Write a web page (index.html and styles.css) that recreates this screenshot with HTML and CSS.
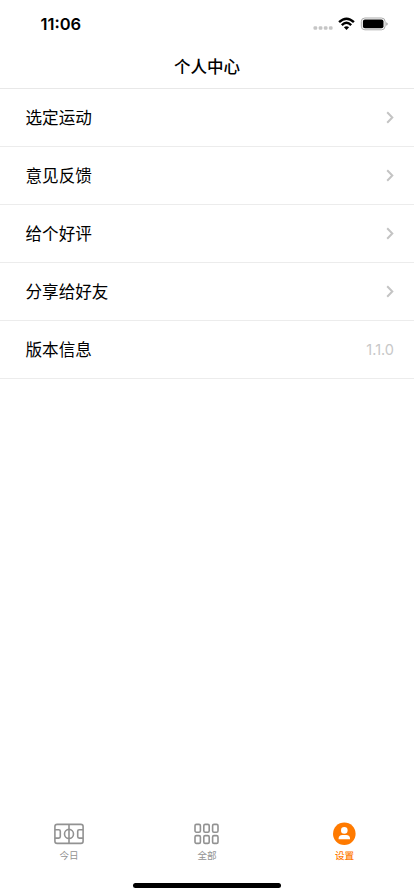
FILE: index.html
```html
<!DOCTYPE html>
<html lang="zh-CN">
<head>
<meta charset="utf-8">
<meta name="viewport" content="width=device-width, initial-scale=1">
<title>个人中心</title>
<link rel="stylesheet" href="styles.css">
</head>
<body>
<div class="screen">
  <div class="status">
    <span class="time">11:06</span>
    <svg class="indicators" width="78" height="16" viewBox="0 0 78 16">
      <g fill="#c6c6c6"><rect x="1.5" y="10.3" width="3.7" height="3.4" rx="1.2"/><rect x="6.7" y="10.3" width="3.7" height="3.4" rx="1.2"/><rect x="11.8" y="10.3" width="3.7" height="3.4" rx="1.2"/><rect x="16.9" y="10.3" width="3.7" height="3.4" rx="1.2"/></g>
      <g fill="none" stroke="#000" stroke-width="2.4"><path d="M27.1 6.2Q34.5-.9 41.9 6.2"/><path d="M29.8 9.1Q34.5 4.6 39.2 9.1"/></g>
      <path d="M31.9 11.3Q34.5 9.1 37.1 11.3L34.5 13.9z"/>
      <rect x="49.3" y="2" width="23.8" height="11.8" rx="3.6" fill="none" stroke="#aaa"/>
      <rect x="50.9" y="3.5" width="20.6" height="8.8" rx="2"/>
      <path d="M74.3 6.2q1.4.5 1.4 1.8t-1.4 1.8z" fill="#999"/>
    </svg>
  </div>
  <h1 class="title">个人中心</h1>
  <ul class="list">
    <li class="row"><span>选定运动</span><svg class="chevron" width="8" height="14" viewBox="0 0 8 14"><path d="M1.2 1.3 6.3 6.5l-5.1 5.2"/></svg></li>
    <li class="row"><span>意见反馈</span><svg class="chevron" width="8" height="14" viewBox="0 0 8 14"><path d="M1.2 1.3 6.3 6.5l-5.1 5.2"/></svg></li>
    <li class="row"><span>给个好评</span><svg class="chevron" width="8" height="14" viewBox="0 0 8 14"><path d="M1.2 1.3 6.3 6.5l-5.1 5.2"/></svg></li>
    <li class="row"><span>分享给好友</span><svg class="chevron" width="8" height="14" viewBox="0 0 8 14"><path d="M1.2 1.3 6.3 6.5l-5.1 5.2"/></svg></li>
    <li class="row"><span>版本信息</span><span class="version">1.1.0</span></li>
  </ul>
  <nav class="tabs">
    <div class="tab">
      <svg width="30" height="24" viewBox="0 0 30 24" fill="none" stroke="#929292" stroke-width="1.6"><rect x=".9" y="2.4" width="28.2" height="19" rx="2.2"/><path d="M15 2.4v19M1 7.7h3.8q1.5 0 1.5 1.5v5.4q0 1.5-1.5 1.5H1M29 7.7h-3.8q-1.5 0-1.5 1.5v5.4q0 1.5 1.5 1.5H29"/><circle cx="15" cy="11.9" r="4.5"/></svg>
      <span>今日</span>
    </div>
    <div class="tab">
      <svg width="26" height="24" viewBox="0 0 26 24" fill="none" stroke="#929292" stroke-width="1.6"><rect x="1" y="2.4" width="5.4" height="7.8" rx="1.4"/><rect x="9.8" y="2.4" width="5.4" height="7.8" rx="1.4"/><rect x="18.6" y="2.4" width="5.4" height="7.8" rx="1.4"/><rect x="1" y="13.6" width="5.4" height="7.8" rx="1.4"/><rect x="9.8" y="13.6" width="5.4" height="7.8" rx="1.4"/><rect x="18.6" y="13.6" width="5.4" height="7.8" rx="1.4"/></svg>
      <span>全部</span>
    </div>
    <div class="tab active">
      <svg width="24" height="24" viewBox="0 0 24 24"><circle cx="11.3" cy="11.7" r="11.3" fill="#ff7a00"/><circle cx="11.3" cy="8.4" r="3.3" fill="#fff"/><path d="M5.6 17.2v-.6q0-3.6 3.8-3.6h3.8q3.8 0 3.8 3.6v.6z" fill="#fff"/></svg>
      <span>设置</span>
    </div>
  </nav>
  <div class="home-bar"></div>
</div>
</body>
</html>
```
FILE: styles.css
```css
* { box-sizing: border-box; }
body {
  margin: 0;
  background: #fff;
  color: #000;
  font-family: Inter, "Noto Sans CJK SC", sans-serif;
}
.screen {
  display: flex;
  flex-direction: column;
  align-items: stretch;
  height: 896px;
}
.status {
  display: flex;
  justify-content: space-between;
  align-items: center;
  height: 48px;
  padding: 0 24px 0 40.5px;
}
.time {
  font-size: 16.5px;
  font-weight: 600;
  line-height: 20px;
}
.title {
  height: 41px;
  margin: 0;
  padding-top: 7px;
  border-bottom: 1px solid #e8e8e8;
  font-size: 16.5px;
  font-weight: 500;
  line-height: 24px;
  text-align: center;
}
.list {
  margin: 0;
  padding: 0;
  list-style: none;
}
.row {
  display: flex;
  justify-content: space-between;
  align-items: center;
  height: 58px;
  padding: 0 20px 0 25.5px;
  border-bottom: 1px solid #ececec;
  font-size: 16.6px;
  line-height: 24px;
}
.chevron {
  fill: none;
  stroke: #c4c4c4;
  stroke-width: 2;
}
.version {
  color: #c8c8c8;
  font-size: 14.5px;
}
.tabs {
  display: flex;
  margin-top: auto;
  height: 61px;
}
.tab {
  display: flex;
  flex: 1;
  flex-direction: column;
  align-items: center;
  color: #929292;
  font-size: 9.6px;
  line-height: 14px;
}
.tab span { margin-top: 3px; }
.tab svg { display: block; }
.active {
  color: #ff7a00;
  font-weight: 500;
}
.active span { margin-right: 1px; }
.home-bar {
  align-self: center;
  width: 148px;
  height: 5px;
  margin-bottom: 8px;
  border-radius: 3px;
  background: #000;
}
```
